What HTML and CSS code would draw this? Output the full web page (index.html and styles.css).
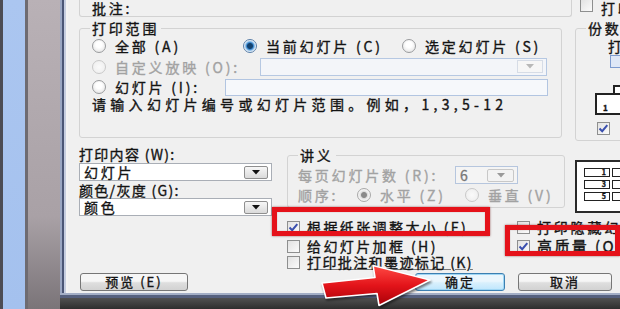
FILE: index.html
```html
<!DOCTYPE html>
<html lang="zh-CN">
<head>
<meta charset="utf-8">
<title>打印</title>
<link rel="stylesheet" href="styles.css">
</head>
<body>
<div class="screen">
  <div class="desk">
    <div class="d-edge"></div>
    <div class="d-blue"></div>
    <div class="d-sep"></div>
    <div class="d-gray"></div>
  </div>
  <div class="win">
    <div class="win-main">
      <div class="win-left"></div>
      <div class="dlg">
        <div class="r-top">
          <div class="printer"><span class="txt">批注:</span></div>
          <div class="cb-top"><span class="cb"></span><span class="txt">打印到文件(L)</span></div>
        </div>

        <div class="r-mid">
          <fieldset class="grp range">
            <legend>打印范围</legend>
            <div class="rows">
              <div class="row r1">
                <div class="opt"><span class="radio"></span>全部 (A)</div>
                <div class="opt"><span class="radio on"></span>当前幻灯片 (C)</div>
                <div class="opt"><span class="radio"></span>选定幻灯片 (S)</div>
              </div>
              <div class="row r2">
                <div class="opt dis w-custom"><span class="radio dis"></span>自定义放映 (O):</div>
                <div class="combo dis">
                  <span class="dd"><svg width="8" height="5" viewBox="0 0 8 5"><path d="M0 0 H8 L4 4.5 Z" fill="#b8b8b8"/></svg></span>
                </div>
              </div>
              <div class="row r3">
                <div class="opt w-slides"><span class="radio"></span>幻灯片 (I):</div>
                <div class="field"></div>
              </div>
              <div class="row r4">请输入幻灯片编号或幻灯片范围。例如，1,3,5-12</div>
            </div>
          </fieldset>

          <fieldset class="grp copies">
            <legend>份数</legend>
            <div class="c-label">打印份数(B):</div>
            <div class="c-spin"></div>
            <div class="c-page-back"></div>
            <div class="c-page"><span>1</span></div>
            <div class="c-check"><span class="cb on"><svg width="13" height="13" viewBox="0 0 13 13"><path d="M2.5 6.5 L5.2 9.2 L10.3 3.2" stroke="#3a4fae" stroke-width="2" fill="none"/></svg></span></div>
          </fieldset>
        </div>

        <div class="r-low">
          <div class="content-col">
            <div class="lbl">打印内容 (W):</div>
            <div class="sel"><span class="val">幻灯片</span><span class="dd"><svg width="8" height="5" viewBox="0 0 8 5"><path d="M0 0 H8 L4 4.5 Z" fill="#111"/></svg></span></div>
            <div class="lbl lbl2">颜色/灰度 (G):</div>
            <div class="sel sel2"><span class="val">颜色</span><span class="dd"><svg width="8" height="5" viewBox="0 0 8 5"><path d="M0 0 H8 L4 4.5 Z" fill="#111"/></svg></span></div>
          </div>

          <fieldset class="grp handout">
            <legend>讲义</legend>
            <div class="h-row">
              <div class="dis w-per">每页幻灯片数 (R):</div>
              <div class="sel small dis"><span class="val">6</span><span class="dd"><svg width="8" height="5" viewBox="0 0 8 5"><path d="M0 0 H8 L4 4.5 Z" fill="#9a9a9a"/></svg></span></div>
            </div>
            <div class="h-row h-row2">
              <div class="dis w-order">顺序:</div>
              <div class="opt dis w-horiz"><span class="radio on dis"></span>水平 (Z)</div>
              <div class="opt dis"><span class="radio dis"></span>垂直 (V)</div>
            </div>
          </fieldset>

          <div class="preview">
            <span class="pg">1</span><span class="pg"></span>
            <span class="pg">3</span><span class="pg"></span>
            <span class="pg">5</span><span class="pg"></span>
          </div>
        </div>

        <div class="r-checks">
          <div class="cb-col">
            <div class="cb-row"><span class="cb on"><svg width="13" height="13" viewBox="0 0 13 13"><path d="M2.5 6.5 L5.2 9.2 L10.3 3.2" stroke="#3a4fae" stroke-width="2" fill="none"/></svg></span>根据纸张调整大小 (F)</div>
            <div class="cb-row gap"><span class="cb"></span>给幻灯片加框 (H)</div>
            <div class="cb-row"><span class="cb"></span><span class="ul">打印批注和墨迹标记 (K)</span></div>
          </div>
          <div class="cb-col2">
            <div class="cb-row"><span class="cb"></span>打印隐藏幻灯片 (H)</div>
            <div class="cb-row gap"><span class="cb on"><svg width="13" height="13" viewBox="0 0 13 13"><path d="M2.5 6.5 L5.2 9.2 L10.3 3.2" stroke="#3a4fae" stroke-width="2" fill="none"/></svg></span><span class="hq">高质量 (Q)</span></div>
          </div>
        </div>

        <div class="r-btns">
          <div class="btn b-prev">预览 (E)</div>
          <div class="btn b-ok">确定</div>
          <div class="btn b-cancel">取消</div>
        </div>
      </div>
    </div>
    <div class="win-bottom"></div>
    <div class="below"></div>
  </div>

  <div class="mark mark-fit"></div>
  <div class="mark mark-hq"></div>
  <svg class="arrow" width="118" height="48" viewBox="0 0 118 48">
    <defs>
      <linearGradient id="ag" x1="0" y1="0" x2="0" y2="1">
        <stop offset="0" stop-color="#ff4a44"/>
        <stop offset="0.5" stop-color="#e3141a"/>
        <stop offset="1" stop-color="#a80008"/>
      </linearGradient>
    </defs>
    <polygon points="4,21 57,15.5 55,3.5 112,18 61,43.5 59,31.5 8,36" fill="url(#ag)" stroke="#ffffff" stroke-width="1.6" stroke-linejoin="round"/>
  </svg>
</div>
</body>
</html>
```

FILE: styles.css
```css
* { box-sizing: border-box; }

body {
  margin: 0;
  width: 620px;
  height: 309px;
  overflow: hidden;
  font-family: "Noto Sans CJK SC", "Noto Sans", sans-serif;
  font-size: 14px;
  line-height: 14px;
  letter-spacing: 2.8px;
  color: #141414;
  -webkit-text-stroke: 0.35px currentColor;
}

.screen {
  position: relative;
  display: flex;
  width: 620px;
  height: 309px;
  overflow: hidden;
  background: #3d3d3d;
}

/* desktop strips on the left */
.desk { display: flex; width: 60px; height: 309px; flex-shrink: 0; }
.d-edge { width: 3px; background: #4c4c54; }
.d-blue { width: 22px; background: linear-gradient(#abc6f0, #a4c1ee); }
.d-sep { width: 3px; background: #6e6b71; }
.d-gray { width: 32px; background: linear-gradient(#b9b1b6, #a9a1a6 70%, #7a7478); }

/* window */
.win { flex: 1; display: flex; flex-direction: column; min-width: 0; }
.win-main { display: flex; height: 293px; }
.win-left {
  width: 8px;
  flex-shrink: 0;
  background: linear-gradient(to right, #9aa6c2 0 2px, #4b5676 2px 4px, #c5cde0 4px 6px, #f3f3f3 6px);
}
.win-bottom { height: 5px; background: linear-gradient(#a3aec6 0 2px, #56617f 2px); }
.below { flex: 1; background: linear-gradient(#515151, #2e2e2e); }

.dlg {
  flex: 1;
  min-width: 0;
  background: #f0f0f0;
  overflow: hidden;
  padding-left: 11px;
  display: flex;
  flex-direction: column;
}

.dis { color: #a2a2a2; }

/* top row */
.r-top { display: flex; height: 17px; flex-shrink: 0; }
.printer {
  width: 493px;
  flex-shrink: 0;
  height: 17px;
  border: 1px solid #d2d2d2;
  border-top: none;
  border-radius: 0 0 3px 3px;
  padding-left: 12px;
  line-height: 14px;
  padding-top: 1px;
}
.cb-top { display: flex; margin-left: 8px; flex-shrink: 0; white-space: nowrap; }
.cb-top .cb { margin-top: -1px; margin-right: 8px; }
.cb-top .txt { padding-top: 1px; }

/* group boxes */
.grp {
  margin: 0;
  border: 1px solid #d3d3d3;
  border-radius: 3px;
  min-width: 0;
  flex-shrink: 0;
}
.grp legend {
  padding: 0 2px;
  line-height: 14px;
  height: 14px;
}

.r-mid { display: flex; align-items: flex-start; margin-top: 4px; flex-shrink: 0; }
.range { width: 483px; height: 117px; padding: 0 0 0 10px; }
.rows { padding-left: 2px; }
.row { display: flex; align-items: center; white-space: nowrap; }
.r1 { display: grid; grid-template-columns: 151px 159px auto; height: 20px; margin-top: 1px; align-items: center; }
.r2 { height: 21px; }
.r3 { height: 20px; }
.r4 { height: 14px; letter-spacing: 4.3px; }
.opt { display: flex; align-items: center; white-space: nowrap; }
.w-custom { width: 168px; flex-shrink: 0; }
.w-slides { width: 133px; flex-shrink: 0; }

.radio {
  width: 14px;
  height: 14px;
  margin-right: 9px;
  border-radius: 50%;
  border: 1px solid #9a9c9e;
  background: radial-gradient(circle at 50% 40%, #ffffff 0 30%, #dcdcdc 100%);
  flex-shrink: 0;
}
.radio.on {
  border-color: #5a7fa8;
  background: radial-gradient(circle, #13426f 0 2.5px, #3d8ad0 3.5px, #bcd9f2 5px, #f4f8fc 6px);
}
.radio.dis { border-color: #c9c9c9; background: radial-gradient(circle, #fafafa, #ececec); }
.radio.on.dis { border-color: #a9a9a9; background: radial-gradient(circle, #8a8a8a 0 2.5px, #dcdcdc 3.5px, #f2f2f2 5px); }

.combo {
  width: 287px;
  height: 18px;
  flex-shrink: 0;
  border: 1px solid #b6c8e2;
  background: #f3f5f9;
  display: flex;
  justify-content: flex-end;
  align-items: center;
  padding-right: 3px;
}
.combo .dd {
  width: 26px;
  height: 13px;
  border: 1px solid #d6dce6;
  background: #f6f6f6;
  display: flex;
  align-items: center;
  justify-content: center;
}
.field {
  width: 323px;
  height: 17px;
  flex-shrink: 0;
  border: 1px solid #b2c5e1;
  background: #f6f8fb;
}

/* copies group (clipped on right) */
.copies { width: 80px; height: 120px; margin-left: 13px; padding: 0 0 0 10px; white-space: nowrap; }
.c-label { margin-top: 4px; padding-left: 22px; }
.c-spin { margin: 2px 0 0 24px; width: 50px; height: 13px; border: 1px solid #7e9cd0; background: #dfe8f7; }
.c-page-back { margin: 17px 0 0 27px; width: 30px; height: 8px; border: 2px solid #222; border-bottom: none; background: #fff; }
.c-page {
  margin-left: 9px;
  width: 50px;
  height: 22px;
  border: 2px solid #222;
  background: #fff;
  font-size: 8px;
  font-weight: bold;
  line-height: 8px;
  letter-spacing: 0;
  padding: 9px 0 0 6px;
}
.c-check { margin: 7px 0 0 11px; }

/* checkboxes */
.cb {
  width: 13px;
  height: 13px;
  flex-shrink: 0;
  border: 1px solid #8e8f8f;
  background: linear-gradient(135deg, #e2e2e2, #fbfbfb);
  display: inline-flex;
}
.cb svg { margin: -1px; }

/* lower section */
.r-low { display: flex; align-items: flex-start; height: 77px; flex-shrink: 0; }
.content-col { width: 193px; flex-shrink: 0; }
.lbl { margin-top: 6px; white-space: nowrap; letter-spacing: 1.3px; }
.lbl2 { margin-top: 2px; }
.sel {
  margin-top: 2px;
  height: 18px;
  border: 1px solid #a9aeb6;
  background: #fff;
  display: flex;
  align-items: center;
  padding-left: 4px;
  padding-right: 3px;
}
.sel2 { margin-top: 1px; }
.sel .val { flex: 1; white-space: nowrap; }
.sel .dd {
  width: 24px;
  height: 13px;
  border: 1px solid #8f8f8f;
  border-radius: 2px;
  background: linear-gradient(#f7f7f7, #dadada);
  display: flex;
  align-items: center;
  justify-content: center;
}

.handout { width: 278px; height: 60px; margin: 7px 0 0 15px; padding: 0 0 0 10px; white-space: nowrap; }
.h-row { display: flex; align-items: center; height: 20px; margin-top: 3px; }
.h-row2 { height: 19px; margin-top: 0; }
.w-per { width: 157px; flex-shrink: 0; }
.sel.small { width: 63px; margin-top: 0; border-color: #b6c6de; background: #f4f4f4; color: #777; }
.sel.small .dd { width: 27px; border-color: #c8c8c8; background: #f3f3f3; }
.w-order { width: 59px; flex-shrink: 0; }
.w-horiz { width: 108px; flex-shrink: 0; }

.preview {
  width: 60px;
  height: 53px;
  margin: 19px 0 0 10px;
  flex-shrink: 0;
  border: 2px solid #2a2a2a;
  background: #fff;
  display: grid;
  grid-template-columns: 26px 26px;
  grid-auto-rows: 9px;
  column-gap: 2px;
  row-gap: 3px;
  padding: 6px 0 0 7px;
}
.pg {
  border: 1.5px solid #222;
  font-size: 7px;
  line-height: 6px;
  font-weight: bold;
  letter-spacing: 0;
  text-align: right;
  padding-right: 3px;
}

/* checkbox rows */
.r-checks { display: flex; height: 51px; flex-shrink: 0; }
.cb-col { margin-left: 208px; width: 200px; padding-top: 1px; flex-shrink: 0; letter-spacing: 2.4px; }
.cb-col2 { margin-left: 30px; padding-top: 1px; flex-shrink: 0; }
.cb-row { display: flex; align-items: center; height: 16px; white-space: nowrap; }
.cb-row .cb { margin-right: 7px; }
.cb-row.gap { margin-top: 3px; }
.ul { text-decoration: underline; text-decoration-color: #777; letter-spacing: 1.4px; }
.hq { font-size: 15px; letter-spacing: 2.4px; }

/* buttons */
.r-btns { display: flex; margin-top: 4px; flex-shrink: 0; }
.btn {
  height: 18px;
  flex-shrink: 0;
  border: 1px solid #767676;
  border-radius: 3px;
  background: linear-gradient(#f6f6f6 0 45%, #dedede 55%, #d2d2d2);
  font-size: 13px;
  line-height: 16px;
  letter-spacing: 2px;
  text-align: center;
  white-space: nowrap;
}
.b-prev { width: 108px; margin-left: 1px; }
.b-ok {
  width: 90px;
  margin-left: 227px;
  border-color: #3c7fb1;
  box-shadow: inset 0 0 0 1px #9fd6f4;
  background: linear-gradient(#eaf6fd 0 45%, #d9f0fc 55%, #bee6fd);
}
.b-cancel { width: 94px; margin-left: 13px; }

/* annotations over the screenshot */
.mark {
  position: absolute;
  border: 5px solid #e5121a;
  box-shadow: 0 0 2px rgba(90, 0, 0, 0.6), inset 0 0 1px rgba(90, 0, 0, 0.5);
}
.mark-fit { left: 272px; top: 207px; width: 218px; height: 29px; }
.mark-hq { left: 505px; top: 225px; width: 115px; height: 31px; }
.arrow {
  position: absolute;
  left: 318px;
  top: 262px;
  filter: drop-shadow(1px 2px 1px rgba(0, 0, 0, 0.5));
}
```
